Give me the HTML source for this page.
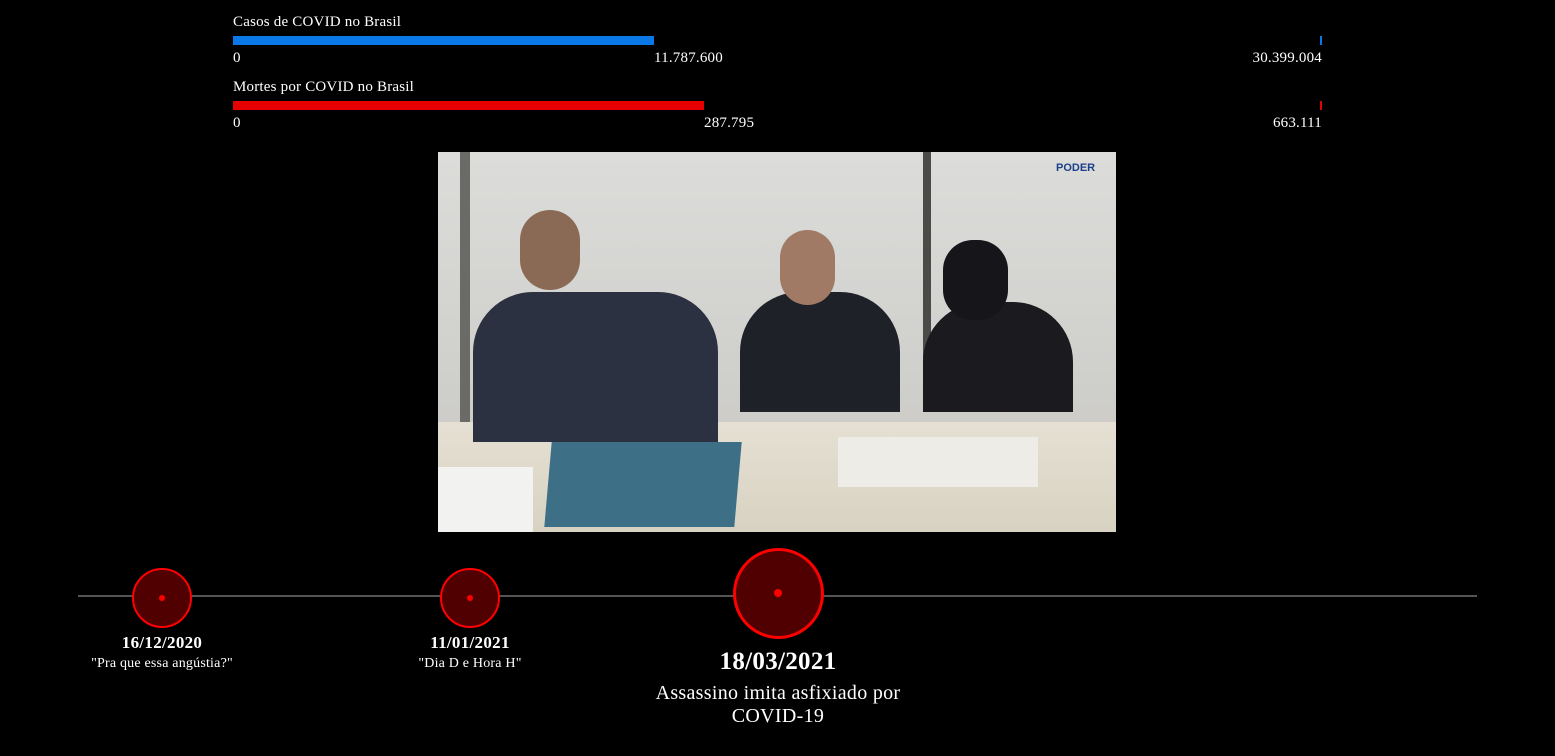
<!DOCTYPE html>
<html><head><meta charset="utf-8"><style>
body{margin:0;background:#000;width:1555px;height:756px;overflow:hidden;position:relative;font-family:"Liberation Serif","DejaVu Serif",serif;color:#fff}
.a{position:absolute;white-space:nowrap}
.lbl{font-size:15px;letter-spacing:0.2px}
.r{text-align:right;transform:translateX(-100%)}
.c{position:absolute;border:2.5px solid #f00;background:#500000;border-radius:50%;box-sizing:border-box}
.d{position:absolute;width:6px;height:6px;background:#f00;border-radius:50%}
.t{position:absolute;text-align:center;transform:translateX(-50%)}
</style></head><body>
<div class="a lbl" style="left:233px;top:14px">Casos de COVID no Brasil</div>
<div class="a" style="left:233px;top:36px;width:421px;height:9px;background:#0a78e6"></div>
<div class="a" style="left:1320px;top:36px;width:2px;height:9px;background:#0a78e6"></div>
<div class="a lbl" style="left:233px;top:50px">0</div>
<div class="a lbl" style="left:654px;top:50px">11.787.600</div>
<div class="a lbl r" style="left:1322px;top:50px">30.399.004</div>
<div class="a lbl" style="left:233px;top:79px">Mortes por COVID no Brasil</div>
<div class="a" style="left:233px;top:101px;width:471px;height:9px;background:#e60000"></div>
<div class="a" style="left:1320px;top:101px;width:2px;height:9px;background:#e60000"></div>
<div class="a lbl" style="left:233px;top:115px">0</div>
<div class="a lbl" style="left:704px;top:115px">287.795</div>
<div class="a lbl r" style="left:1322px;top:115px">663.111</div>

<div class="a" style="left:438px;top:152px;width:678px;height:380px;overflow:hidden;background:linear-gradient(#dcdcda,#cfcfcc 60%,#c8c5bd)">
 <div class="a" style="left:22px;top:0;width:10px;height:300px;background:#6a6a66"></div>
 <div class="a" style="left:485px;top:0;width:8px;height:260px;background:#4a4a48"></div>
 <div class="a" style="left:0;top:270px;width:678px;height:110px;background:linear-gradient(#e5e0d3,#d8d2c2)"></div>
 <div class="a" style="left:35px;top:140px;width:245px;height:150px;background:#2b3140;border-radius:60px 60px 0 0"></div>
 <div class="a" style="left:82px;top:58px;width:60px;height:80px;background:#8a6a55;border-radius:30px"></div>
 <div class="a" style="left:302px;top:140px;width:160px;height:120px;background:#1f2128;border-radius:60px 60px 0 0"></div>
 <div class="a" style="left:342px;top:78px;width:55px;height:75px;background:#a07a65;border-radius:28px"></div>
 <div class="a" style="left:485px;top:150px;width:150px;height:110px;background:#1a1a1f;border-radius:60px 60px 0 0"></div>
 <div class="a" style="left:505px;top:88px;width:65px;height:80px;background:#15151a;border-radius:30px"></div>
 <div class="a" style="left:110px;top:290px;width:190px;height:85px;background:#3d6f86;transform:skewX(-5deg)"></div>
 <div class="a" style="left:0;top:315px;width:95px;height:65px;background:#f2f2f0"></div>
 <div class="a" style="left:400px;top:285px;width:200px;height:50px;background:#eeece6"></div>
 <div class="a" style="left:618px;top:10px;font:bold 11px 'Liberation Sans',sans-serif;color:#1b3f8a">PODER</div>
</div>

<div class="a" style="left:78px;top:595px;width:1399px;height:2px;background:#555"></div>
<div class="c" style="left:132px;top:568px;width:60px;height:60px"></div><div class="d" style="left:159px;top:595px"></div>
<div class="c" style="left:440px;top:568px;width:60px;height:60px"></div><div class="d" style="left:467px;top:595px"></div>
<div class="c" style="left:733px;top:548px;width:91px;height:91px;border-width:3px"></div><div class="d" style="left:774px;top:589px;width:8px;height:8px"></div>

<div class="t" style="left:162px;top:633px;font-size:17px;font-weight:bold;letter-spacing:0.3px">16/12/2020</div>
<div class="t" style="left:162px;top:656px;font-size:14px;letter-spacing:0.2px">"Pra que essa angústia?"</div>
<div class="t" style="left:470px;top:633px;font-size:17px;font-weight:bold;letter-spacing:0.3px">11/01/2021</div>
<div class="t" style="left:470px;top:656px;font-size:14px;letter-spacing:0.2px">"Dia D e Hora H"</div>
<div class="t" style="left:778px;top:648px;font-size:25px;font-weight:bold;letter-spacing:0.3px">18/03/2021</div>
<div class="t" style="left:778px;top:682px;font-size:20px;line-height:23px;width:290px;letter-spacing:0.3px">Assassino imita asfixiado por<br>COVID-19</div>
</body></html>
